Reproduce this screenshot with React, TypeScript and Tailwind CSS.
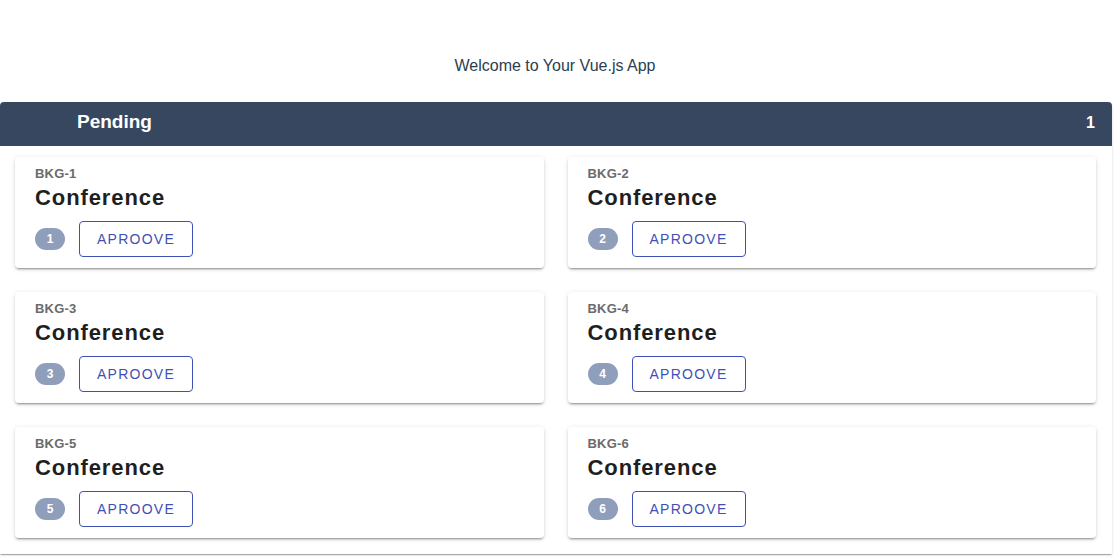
import React from "react";

const bookings = [1, 2, 3, 4, 5, 6].map((n) => ({ id: n, code: "BKG-" + n, title: "Conference" }));

function BookingCard({ booking }: { booking: { id: number; code: string; title: string } }) {
  return (
    <div className="bg-white rounded-[4px] shadow-[0_3px_1px_-2px_rgba(0,0,0,0.2),0_2px_2px_0_rgba(0,0,0,0.14),0_1px_5px_0_rgba(0,0,0,0.12)] pt-[7px] pb-[11px] px-5">
      <div className="text-[13px] leading-[19px] font-bold tracking-[0.2px] text-[#6b6b6b]">{booking.code}</div>
      <div className="text-[22px] leading-[30px] font-bold tracking-[0.9px] text-[#1f1f1f]">{booking.title}</div>
      <div className="mt-[8px] flex items-center gap-[14px]">
        <span className="w-[30px] h-[22px] rounded-full bg-[#8f9fbb] text-white text-[12px] font-bold flex items-center justify-center">
          {booking.id}
        </span>
        <button className="w-[114px] h-[36px] border border-[#3f51b5] rounded-[4px] text-[14px] tracking-[1.25px] text-[#3f51b5] uppercase">
          Aproove
        </button>
      </div>
    </div>
  );
}

export default function App() {
  return (
    <div className="min-h-screen bg-white font-['Liberation_Sans',Arial,sans-serif]">
      <div className="pt-[57px] h-[102px] pr-[7px] text-center text-[16px] leading-[18px] text-[#2c3e50]">
        Welcome to Your Vue.js App
      </div>
      <div className="w-[1112px] rounded-t-[4px] bg-white shadow-[0_2px_1px_-1px_rgba(0,0,0,0.2),0_1px_1px_0_rgba(0,0,0,0.14),0_1px_3px_0_rgba(0,0,0,0.12)]">
        <div className="h-[44px] bg-[#37475f] rounded-t-[4px] flex items-center justify-between pl-[77px] pr-[17px] pb-[3px] text-white">
          <span className="text-[19px] font-bold">Pending</span>
          <span className="text-[16px] font-bold">1</span>
        </div>
        <div className="grid grid-cols-2 gap-6 pt-[11px] pl-[15px] pr-[16px] pb-[16px]">
          {bookings.map((b) => (
            <BookingCard key={b.id} booking={b} />
          ))}
        </div>
      </div>
    </div>
  );
}
